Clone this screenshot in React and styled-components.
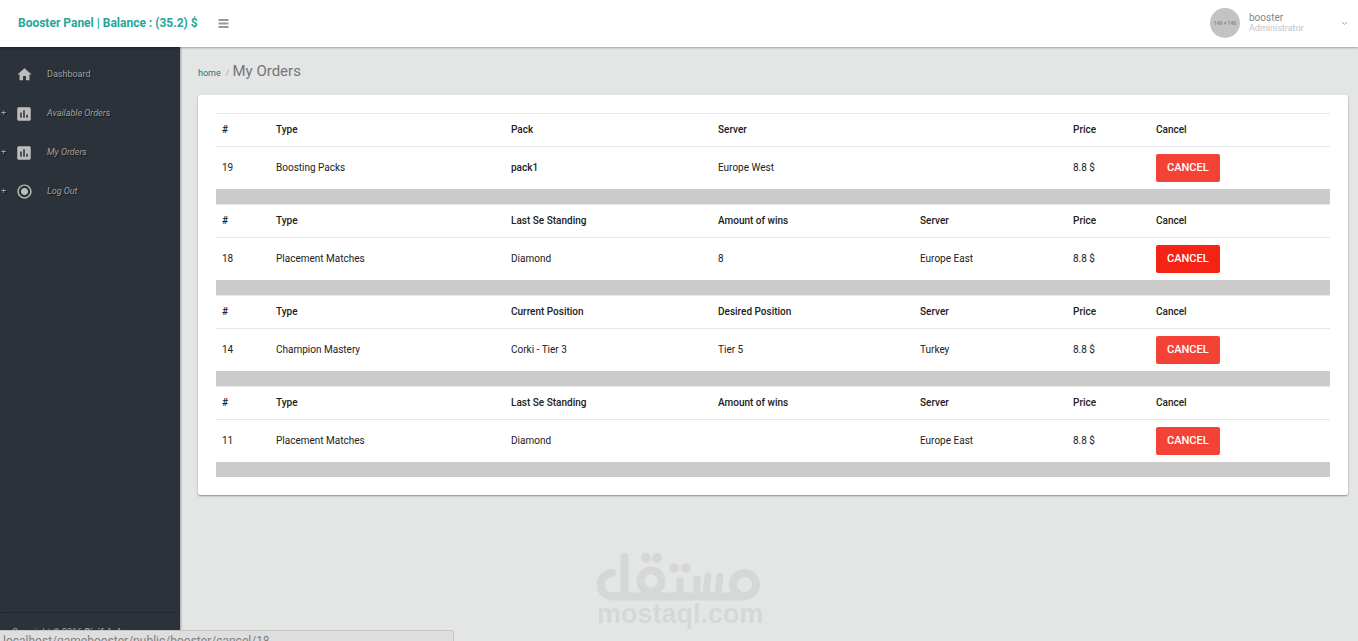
import React, { useState } from "react";
import styled, { createGlobalStyle } from "styled-components";
import { MdHome, MdAssessment, MdRadioButtonChecked } from "react-icons/md";

const GlobalStyle = createGlobalStyle`
  * {
    box-sizing: border-box;
  }
  body {
    margin: 0;
    background: #e4e6e5;
    color: #212121;
    font-family: Roboto, "Liberation Sans", sans-serif;
    font-size: 10px;
    line-height: 15px;
  }
  a {
    color: inherit;
    text-decoration: none;
  }
`;

const Page = styled.div`
  display: flex;
  flex-direction: column;
  min-height: 100vh;
`;

// header
const Header = styled.header`
  display: flex;
  align-items: center;
  height: 47px;
  padding: 0 10px 1px 18px;
  background: #fff;
  box-shadow: 0 1px 2px rgba(0, 0, 0, 0.3);
  z-index: 2;
`;

const Brand = styled.a`
  color: #26a69a;
  font-size: 12px;
  font-weight: 700;
  line-height: 18px;
`;

const MenuButton = styled.button`
  display: flex;
  margin-left: 20px;
  padding: 0;
  border: 0;
  background: none;
  color: #999;
  cursor: pointer;
`;

const UserButton = styled.button`
  display: flex;
  align-items: center;
  width: 138px;
  margin-left: auto;
  padding: 0;
  border: 0;
  background: none;
  color: #858585;
  font-family: inherit;
  text-align: left;
  cursor: pointer;
`;

const Avatar = styled.span`
  width: 30px;
  height: 30px;
  border-radius: 50%;
  background: #c3c3c3;
  color: #8c8c8c;
  font-size: 5px;
  font-weight: 700;
  line-height: 30px;
  text-align: center;
`;

const UserText = styled.span`
  flex: 1;
  margin-left: 9px;
  font-size: 10px;
  line-height: 11px;
`;

const UserRole = styled.span`
  display: block;
  color: #c4c4c4;
  font-size: 9px;
`;

// sidebar
const Body = styled.div`
  display: flex;
  flex: 1;
`;

const Sidebar = styled.aside`
  display: flex;
  flex-direction: column;
  flex: 0 0 180px;
  padding-top: 8px;
  background: #2b323a;
  box-shadow: 1px 0 2px rgba(0, 0, 0, 0.3);
  color: #a0a2a5;
`;

const MenuLink = styled.a`
  display: grid;
  grid-template-columns: 14px 20px 1fr;
  align-items: center;
  height: 39px;
  font-size: 9px;
  font-style: ${(props) => (props.$sub ? "italic" : "normal")};
  text-shadow: 1px 1px 1px rgba(0, 0, 0, 0.6);
  svg {
    color: #bdbdbd;
    justify-self: center;
  }
`;

const Plus = styled.span`
  padding-left: 1px;
  font-style: normal;
`;

const MenuLabel = styled.span`
  padding-left: 13px;
`;

const Copyright = styled.div`
  margin-top: auto;
  padding: 12px 12px 1px;
  border-top: 1px dotted #1d2228;
  font-size: 9px;
  line-height: 15px;
`;

// content
const Content = styled.main`
  flex: 1;
  min-width: 0;
  padding: 14px 10px 14px 18px;
`;

const Breadcrumb = styled.nav`
  display: flex;
  align-items: baseline;
  margin-bottom: 12px;
  color: #aaa;
  font-size: 9px;
  line-height: 20px;
`;

const HomeLink = styled.a`
  margin-right: 5px;
  color: #2a6f80;
`;

const PageTitle = styled.h1`
  margin: 0 0 0 3px;
  color: #757575;
  font-size: 15px;
  font-weight: 400;
  line-height: 20px;
`;

const Card = styled.section`
  padding: 18px;
  border-radius: 2px;
  background: #fff;
  box-shadow: 0 1px 2px rgba(0, 0, 0, 0.4);
`;

const OrdersTable = styled.table`
  width: 100%;
  table-layout: fixed;
  border-collapse: separate;
  border-spacing: 0;
`;

const Col = styled.col`
  width: ${(props) => props.$width}px;
`;

const HeadCell = styled.th`
  height: 33px;
  padding: 0 6px 1px;
  border-top: 1px solid #e8e8e8;
  font-weight: 500;
  text-align: left;
`;

const Cell = styled.td`
  height: 43px;
  padding: 7px 6px;
  border-top: 1px solid #e8e8e8;
  font-weight: ${(props) => (props.$bold ? 500 : 400)};
  vertical-align: top;
  line-height: 28px;
`;

const Divider = styled.td`
  height: 15px;
  padding: 0;
  background: #cbcbcb;
`;

const CancelButton = styled.button`
  display: block;
  height: 28px;
  padding: 0 11px;
  border: 0;
  border-radius: 2px;
  background: ${(props) => (props.$active ? "#f32316" : "#f44336")};
  color: #fff;
  font-family: inherit;
  font-size: 11px;
  font-weight: 500;
  line-height: 28px;
  cursor: pointer;
  &:hover {
    background: #f32316;
  }
`;

const Watermark = styled.div`
  position: fixed;
  bottom: 13px;
  left: 50%;
  width: 164px;
  margin-left: -82px;
  color: #d6d8d7;
  text-align: center;
  pointer-events: none;
  svg {
    display: block;
  }
`;

const WatermarkText = styled.div`
  font-family: "Liberation Sans", Arial, sans-serif;
  font-size: 27px;
  font-weight: 700;
  line-height: 27px;
`;

const StatusBar = styled.div`
  position: fixed;
  bottom: -10px;
  left: 0;
  z-index: 3;
  width: 454px;
  height: 21px;
  padding-left: 3px;
  border: 1px solid #c6c6c6;
  border-left: 0;
  border-radius: 0 3px 0 0;
  background: #dedede;
  color: #808080;
  font-family: Roboto, sans-serif;
  font-size: 12px;
  line-height: 20px;
  white-space: nowrap;
`;

const menu = [
  { label: "Dashboard", icon: MdHome, size: 17 },
  { label: "Available Orders", icon: MdAssessment, size: 18, sub: true },
  { label: "My Orders", icon: MdAssessment, size: 18, sub: true },
  { label: "Log Out", icon: MdRadioButtonChecked, size: 17, sub: true },
];

const columns = [54, 235, 207, 202, 153, 83, 180];

const orders = [
  {
    id: 19,
    heads: ["Type", "Pack", "Server", ""],
    values: ["Boosting Packs", "pack1", "Europe West", ""],
    boldPack: true,
  },
  {
    id: 18,
    heads: ["Type", "Last Se Standing", "Amount of wins", "Server"],
    values: ["Placement Matches", "Diamond", "8", "Europe East"],
  },
  {
    id: 14,
    heads: ["Type", "Current Position", "Desired Position", "Server"],
    values: ["Champion Mastery", "Corki - Tier 3", "Tier 5", "Turkey"],
  },
  {
    id: 11,
    heads: ["Type", "Last Se Standing", "Amount of wins", "Server"],
    values: ["Placement Matches", "Diamond", "", "Europe East"],
  },
];

const WatermarkLogo = () => (
  <svg width="164" height="48" viewBox="0 0 164 48" fill="none" stroke="currentColor" strokeWidth="8" strokeLinecap="round">
    <path d="M15 20 A11.5 11.5 0 1 0 15.500 43.500 H148" />
    <path d="M27.500 4 V43" />
    <circle cx="54" cy="28" r="10.500" />
    <path d="M83 27 V42 M100 26 V42 M111 23 L109 42 M123 23 L121 42" strokeWidth="7" />
    <circle cx="147.500" cy="31.500" r="11.500" />
    <g fill="currentColor" stroke="none">
      <circle cx="49" cy="5" r="5" />
      <circle cx="60" cy="5" r="5" />
      <circle cx="77" cy="15" r="5" />
      <circle cx="89" cy="15" r="5" />
    </g>
  </svg>
);

const App = () => {
  const [activeId, setActiveId] = useState(18);

  return (
    <>
      <GlobalStyle />
      <Page>
        <Header>
          <Brand href="#">Booster Panel | Balance : (35.2) $</Brand>
          <MenuButton type="button" aria-label="Toggle menu">
            <svg width="11" height="9" viewBox="0 0 11 9" fill="currentColor">
              <path d="M0.500 0h10v2h-10zM0.500 3.500h10v2h-10zM0.500 7h10v2h-10z" />
            </svg>
          </MenuButton>
          <UserButton type="button">
            <Avatar>140 × 140</Avatar>
            <UserText>
              booster
              <UserRole>Administrator</UserRole>
            </UserText>
            <svg width="7" height="5" viewBox="0 0 7 5" fill="none" stroke="#a5a5a5">
              <path d="M1 1l2.500 2.500L6 1" />
            </svg>
          </UserButton>
        </Header>

        <Body>
          <Sidebar>
            {menu.map((item) => {
              const Icon = item.icon;
              return (
                <MenuLink key={item.label} href="#" $sub={item.sub}>
                  <Plus>{item.sub ? "+" : ""}</Plus>
                  <Icon size={item.size} />
                  <MenuLabel>{item.label}</MenuLabel>
                </MenuLink>
              );
            })}
            <Copyright>
              Copyright © 2016 <a href="#"><b>DigifyLabs</b></a>
            </Copyright>
          </Sidebar>

          <Content>
            <Breadcrumb>
              <HomeLink href="#">home</HomeLink>
              <span>/</span>
              <PageTitle>My Orders</PageTitle>
            </Breadcrumb>

            <Card>
              <OrdersTable>
                <colgroup>
                  {columns.map((width, i) => (
                    <Col key={i} $width={width} />
                  ))}
                </colgroup>
                {orders.map((order) => (
                  <tbody key={order.id}>
                    <tr>
                      <HeadCell>#</HeadCell>
                      {order.heads.map((head, i) => (
                        <HeadCell key={i}>{head}</HeadCell>
                      ))}
                      <HeadCell>Price</HeadCell>
                      <HeadCell>Cancel</HeadCell>
                    </tr>
                    <tr>
                      <Cell>{order.id}</Cell>
                      {order.values.map((value, i) => (
                        <Cell key={i} $bold={order.boldPack && i === 1}>
                          {value}
                        </Cell>
                      ))}
                      <Cell>8.8 $</Cell>
                      <Cell>
                        <CancelButton
                          type="button"
                          $active={activeId === order.id}
                          onMouseEnter={() => setActiveId(order.id)}
                        >
                          CANCEL
                        </CancelButton>
                      </Cell>
                    </tr>
                    <tr>
                      <Divider colSpan={7} />
                    </tr>
                  </tbody>
                ))}
              </OrdersTable>
            </Card>
          </Content>
        </Body>
      </Page>

      <Watermark>
        <WatermarkLogo />
        <WatermarkText>mostaql.com</WatermarkText>
      </Watermark>
      <StatusBar>localhost/gamebooster/public/booster/cancel/18</StatusBar>
    </>
  );
};

export default App;
